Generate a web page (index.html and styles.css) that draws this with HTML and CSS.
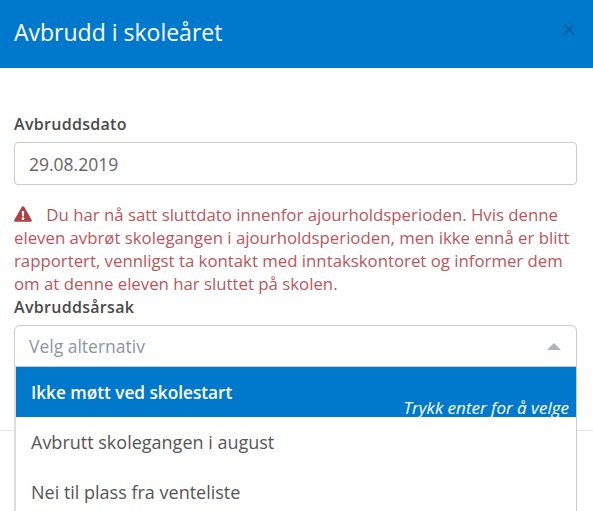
FILE: index.html
```html
<!DOCTYPE html>
<html lang="en">
<head>
    <meta charset="UTF-8">
    <meta name="viewport" content="width=device-width, initial-scale=1.0">
    <title>Avbrudd i skoleåret</title>
    <link rel="stylesheet" href="styles.css">
</head>
<body>
    <div class="modal">
        <div class="modal-header">
            <h1>Avbrudd i skoleåret</h1>
            <span class="close-button">&times;</span>
        </div>
        <div class="modal-body">
            <label class="field-label">Avbruddsdato</label>
            <div class="text-field">29.08.2019</div>
            <p class="warning">
                <svg class="warning-icon" viewBox="0 0 18 16" width="18" height="16">
                    <path fill="#a94442" fill-rule="evenodd" d="M9 0.3c.6 0 1 .3 1.3.8l7.3 12.6c.6 1-.1 2-1.2 2H1.6c-1.1 0-1.8-1-1.2-2L7.700 1.100C8 .6 8.400 .3 9 .3zM7.800 5l.3 5.400h1.800L10.200 5zM9 11.300a1.400 1.400 0 1 0 0 2.800a1.400 1.400 0 0 0 0-2.800z"/>
                </svg>
                Du har nå satt sluttdato innenfor ajourholdsperioden. Hvis denne eleven avbrøt skolegangen i ajourholdsperioden, men ikke ennå er blitt rapportert, vennligst ta kontakt med inntakskontoret og informer dem om at denne eleven har sluttet på skolen.
            </p>
            <label class="field-label">Avbruddsårsak</label>
            <div class="select">
                <div class="select-value">
                    <span>Velg alternativ</span>
                    <span class="select-arrow"></span>
                </div>
                <div class="select-menu">
                    <div class="select-option active">
                        Ikke møtt ved skolestart
                        <span class="select-hint">Trykk enter for å velge</span>
                    </div>
                    <div class="select-option">Avbrutt skolegangen i august</div>
                    <div class="select-option">Nei til plass fra venteliste</div>
                </div>
            </div>
        </div>
        <div class="modal-footer"></div>
    </div>
</body>
</html>
```

FILE: styles.css
```css
html, body {
    height: 511px;
    overflow: hidden;
}

body {
    margin: 0;
    background-color: #fff;
    font-family: "Open Sans", sans-serif;
    color: #555;
}

.modal-header {
    height: 68px;
    padding: 0 14px;
    box-sizing: border-box;
    display: flex;
    align-items: center;
    justify-content: space-between;
    background-color: #0079cd;
}

.modal-header h1 {
    margin: 0 0 4px;
    font-size: 23px;
    font-weight: 400;
    color: #fff;
}

.close-button {
    margin-right: 3px;
    margin-top: -11px;
    font-size: 24px;
    font-weight: 400;
    line-height: 1;
    color: #000;
    opacity: 0.25;
}

.modal-body {
    padding: 45px 16px 63px 14px;
}

.field-label {
    display: block;
    font-size: 16px;
    font-weight: 600;
    line-height: 22px;
    letter-spacing: 0.3px;
    color: #4a4a4a;
}

.text-field {
    height: 43px;
    margin-top: 7px;
    padding: 0 14px;
    box-sizing: border-box;
    display: flex;
    align-items: center;
    border: 1px solid #ccc;
    border-radius: 4px;
    font-size: 17.5px;
    color: #666;
}

.warning {
    margin: 18px 0 1px;
    font-size: 16.8px;
    line-height: 23px;
    color: #b9565a;
}

.warning-icon {
    margin-right: 10px;
    vertical-align: -1px;
}

.select {
    position: relative;
    margin-top: 7px;
}

.select-value {
    height: 42px;
    padding: 0 15px 0 14px;
    box-sizing: border-box;
    display: flex;
    align-items: center;
    justify-content: space-between;
    border: 1px solid #ccc;
    border-radius: 6px 6px 0 0;
    font-size: 17.5px;
    color: #8a96a0;
}

.select-arrow {
    border-left: 7px solid transparent;
    border-right: 7px solid transparent;
    border-bottom: 7px solid #adb5bb;
}

.select-menu {
    position: absolute;
    top: 42px;
    left: 0;
    right: 0;
    background-color: #fff;
    border: 1px solid #ccc;
    border-left: 2px solid #ddd;
    border-top: none;
}

.select-option {
    position: relative;
    height: 50px;
    padding: 0 15px;
    display: flex;
    align-items: center;
    overflow: hidden;
    font-size: 18px;
    color: #555;
}

.select-option.active {
    background-color: #0079cd;
    font-size: 17.2px;
    font-weight: 600;
    color: #fff;
}

.select-hint {
    position: absolute;
    right: 7px;
    bottom: -2px;
    font-size: 17px;
    font-style: italic;
    font-weight: 400;
}

.modal-footer {
    height: 60px;
    border-top: 1px solid #e5e5e5;
}
```
